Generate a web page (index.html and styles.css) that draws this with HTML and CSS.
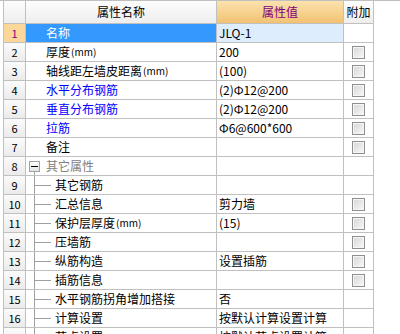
FILE: index.html
```html
<!DOCTYPE html>
<html lang="zh-CN">
<head>
<meta charset="utf-8">
<title>属性编辑</title>
<link rel="stylesheet" href="styles.css">
</head>
<body>
<div class="sheet">
  <div class="grid">
    <div class="hd hd-num"></div>
    <div class="hd hd-name">属性名称</div>
    <div class="hd hd-val">属性值</div>
    <div class="hd hd-att">附加</div>

    <div class="num num-sel">1</div>
    <div class="name name-sel">名称</div>
    <div class="val val-sel">JLQ-1</div>
    <div class="att"></div>

    <div class="num">2</div>
    <div class="name">厚度<span class="unit">(mm)</span></div>
    <div class="val">200</div>
    <div class="att"><span class="cb"></span></div>

    <div class="num">3</div>
    <div class="name">轴线距左墙皮距离<span class="unit">(mm)</span></div>
    <div class="val">(100)</div>
    <div class="att"><span class="cb"></span></div>

    <div class="num">4</div>
    <div class="name blue">水平分布钢筋</div>
    <div class="val">(2)Ф12@200</div>
    <div class="att"><span class="cb"></span></div>

    <div class="num">5</div>
    <div class="name blue">垂直分布钢筋</div>
    <div class="val">(2)Ф12@200</div>
    <div class="att"><span class="cb"></span></div>

    <div class="num">6</div>
    <div class="name blue">拉筋</div>
    <div class="val">Φ6@600*600</div>
    <div class="att"><span class="cb"></span></div>

    <div class="num">7</div>
    <div class="name">备注</div>
    <div class="val"></div>
    <div class="att"><span class="cb"></span></div>

    <div class="num">8</div>
    <div class="name group"><span class="node"><span class="minus"><span class="bar"></span></span></span><span class="group-label">其它属性</span></div>
    <div class="val"></div>
    <div class="att"></div>

    <div class="num">9</div>
    <div class="name child"><span class="branch"></span>其它钢筋</div>
    <div class="val"></div>
    <div class="att"></div>

    <div class="num">10</div>
    <div class="name child"><span class="branch"></span>汇总信息</div>
    <div class="val">剪力墙</div>
    <div class="att"><span class="cb"></span></div>

    <div class="num">11</div>
    <div class="name child"><span class="branch"></span>保护层厚度<span class="unit">(mm)</span></div>
    <div class="val">(15)</div>
    <div class="att"><span class="cb"></span></div>

    <div class="num">12</div>
    <div class="name child"><span class="branch"></span>压墙筋</div>
    <div class="val"></div>
    <div class="att"><span class="cb"></span></div>

    <div class="num">13</div>
    <div class="name child"><span class="branch"></span>纵筋构造</div>
    <div class="val">设置插筋</div>
    <div class="att"><span class="cb"></span></div>

    <div class="num">14</div>
    <div class="name child"><span class="branch"></span>插筋信息</div>
    <div class="val"></div>
    <div class="att"><span class="cb"></span></div>

    <div class="num">15</div>
    <div class="name child"><span class="branch"></span>水平钢筋拐角增加搭接</div>
    <div class="val">否</div>
    <div class="att"></div>

    <div class="num">16</div>
    <div class="name child"><span class="branch"></span>计算设置</div>
    <div class="val">按默认计算设置计算</div>
    <div class="att"></div>

    <div class="num">17</div>
    <div class="name child"><span class="branch"></span>节点设置</div>
    <div class="val">按默认节点设置计算</div>
    <div class="att"></div>
  </div>
</div>
</body>
</html>
```

FILE: styles.css
```css
html, body {
  margin: 0;
  padding: 0;
  background: #ffffff;
  overflow: hidden;
}

body {
  font-family: "Noto Sans CJK SC", "Noto Sans", sans-serif;
  font-size: 12px;
  color: #000000;
}

.sheet {
  border-top: 1px solid #c0c0c0;
  height: 333px;
}

.grid {
  display: grid;
  width: max-content;
  margin-left: 3px;
  padding: 0 1px 1px 1px;
  background: #c0c0c0;
  grid-template-columns: 21px 190px 126px 29px;
  grid-template-rows: 22px;
  grid-auto-rows: 18px;
  gap: 1px;
}

.grid > div {
  display: flex;
  align-items: center;
  line-height: 18px;
  white-space: nowrap;
  overflow: hidden;
  background: #ffffff;
}

.hd {
  justify-content: center;
  background: linear-gradient(#fdfdfd, #eeeeee) !important;
}

.grid > .hd-val {
  background: linear-gradient(#fbe2ae, #f2c272) !important;
  color: #800080;
}

.num {
  justify-content: center;
  background: linear-gradient(#fbfbfb, #ebebeb) !important;
  font-size: 11px;
}

.grid > .num-sel {
  background: #fcd79a !important;
  color: #800080;
}

.name {
  padding-left: 20px;
}

.unit {
  font-size: 10px;
  margin-left: 1px;
}

.grid > .name-sel {
  background: #3399ff;
  color: #ffffff;
}

.grid > .val-sel {
  background: #ddedfd;
}

.blue {
  color: #0000ff;
}

.val {
  padding-left: 2px;
}

.att {
  justify-content: center;
}

.cb {
  box-sizing: border-box;
  width: 13px;
  height: 13px;
  border: 1px solid #8f8f8f;
  box-shadow: inset 0 0 0 1px #f6f6f6;
  background: linear-gradient(135deg, #d6d6d6, #f8f8f8);
}

.grid > .group {
  padding-left: 3px;
  color: #808080;
}

.node {
  align-self: stretch;
  width: 11px;
  display: flex;
  align-items: center;
  background: linear-gradient(#a0a0a0, #a0a0a0) no-repeat 5px 100% / 1px 50%;
}

.minus {
  box-sizing: border-box;
  width: 11px;
  height: 11px;
  border: 1px solid #a0a0a0;
  background: linear-gradient(#ffffff, #e4e4e4);
  display: flex;
  align-items: center;
  justify-content: center;
}

.bar {
  width: 7px;
  height: 1px;
  background: #000000;
}

.group-label {
  margin-left: 6px;
}

.grid > .child {
  padding-left: 8px;
}

.branch {
  align-self: stretch;
  box-sizing: border-box;
  width: 17px;
  margin-right: 4px;
  border-left: 1px solid #a0a0a0;
  background: linear-gradient(#a0a0a0, #a0a0a0) no-repeat 0 50% / 100% 1px;
}
```
